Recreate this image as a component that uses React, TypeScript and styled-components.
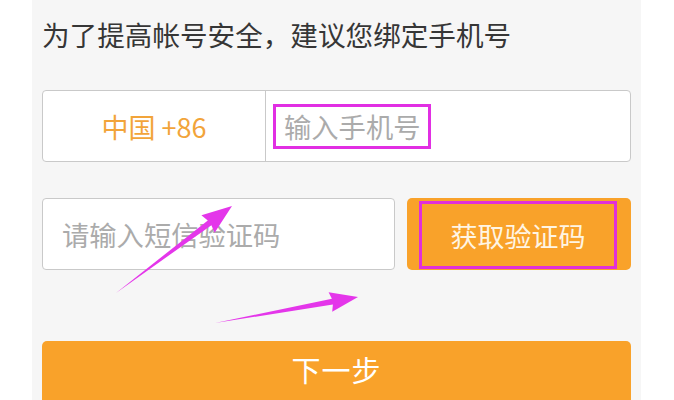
import React from "react";
import styled, { createGlobalStyle } from "styled-components";

const Global = createGlobalStyle`
  html, body { margin: 0; padding: 0; background: #ffffff; }
  body { font-family: "Noto Sans CJK SC", "Noto Sans", sans-serif; overflow: hidden; }
`;

const Page = styled.div`
  width: 674px;
  height: 400px;
  background: #ffffff;
  display: flex;
  overflow: hidden;
`;

const Panel = styled.div`
  position: relative;
  margin-left: 32px;
  width: 609px;
  height: 460px;
  background: #f6f6f6;
  padding: 21px 10px 0 10px;
  box-sizing: border-box;
  display: flex;
  flex-direction: column;
`;

const Title = styled.div`
  font-size: 27.6px;
  line-height: 27px;
  color: #363636;
  white-space: nowrap;
`;

const PhoneBox = styled.div`
  margin-top: 42px;
  height: 72px;
  box-sizing: border-box;
  border: 1.5px solid #c9c9c9;
  border-radius: 4px;
  background: #ffffff;
  display: flex;
`;

const Country = styled.div`
  width: 222px;
  flex: none;
  border-right: 1.5px solid #c9c9c9;
  display: flex;
  align-items: center;
  justify-content: center;
  font-size: 27px;
  color: #f2a43a;
`;

const PhoneField = styled.div`
  flex: 1;
  display: flex;
  align-items: center;
  padding-left: 7px;
`;

const Highlight = styled.span`
  display: inline-flex;
  align-items: center;
  box-sizing: border-box;
  height: 45px;
  padding: 0 8px;
  border: 3px solid #e12fe3;
`;

const Placeholder = styled.span`
  font-size: 27.3px;
  color: #ababab;
  white-space: nowrap;
`;

const CodeRow = styled.div`
  margin-top: 36px;
  height: 72px;
  display: flex;
  gap: 12px;
`;

const CodeField = styled.div`
  width: 353px;
  flex: none;
  box-sizing: border-box;
  border: 1.5px solid #c9c9c9;
  border-radius: 4px;
  background: #ffffff;
  display: flex;
  align-items: center;
  padding-left: 19px;
`;

const SendButton = styled.div`
  flex: 1;
  background: #f9a22a;
  border-radius: 5px;
  display: flex;
  align-items: center;
  padding: 3px 14px 1px 12px;
  box-sizing: border-box;
`;

const ButtonHighlight = styled.span`
  flex: 1;
  align-self: stretch;
  border: 3px solid #e12fd9;
  display: flex;
  align-items: center;
  justify-content: center;
  font-size: 27px;
  color: #fff5e4;
`;

const NextButton = styled.div`
  margin-top: 71px;
  height: 72px;
  box-sizing: border-box;
  padding-top: 7px;
  background: #f9a22a;
  border-radius: 5px 5px 0 0;
  display: flex;
  align-items: flex-start;
  justify-content: center;
  font-size: 29px;
  color: #ffffff;
  letter-spacing: 1px;
`;

const Overlay = styled.svg`
  position: absolute;
  left: -32px;
  top: 0;
  width: 674px;
  height: 400px;
  pointer-events: none;
`;

export default function App() {
  return (
    <>
      <Global />
      <Page>
        <Panel>
          <Title>为了提高帐号安全，建议您绑定手机号</Title>
          <PhoneBox>
            <Country>中国 +86</Country>
            <PhoneField>
              <Highlight>
                <Placeholder>输入手机号</Placeholder>
              </Highlight>
            </PhoneField>
          </PhoneBox>
          <CodeRow>
            <CodeField>
              <Placeholder>请输入短信验证码</Placeholder>
            </CodeField>
            <SendButton>
              <ButtonHighlight>获取验证码</ButtonHighlight>
            </SendButton>
          </CodeRow>
          <NextButton>下一步</NextButton>
          <Overlay viewBox="0 0 674 400">
            <polygon
              fill="#e436ea"
              points="116,293 207.8,220.4 201.4,215.2 232,206 214.6,232.8 211.4,225.2"
            />
            <polygon
              fill="#e436ea"
              points="215,323 331.9,298.7 328.6,292.2 358,297 332.2,311.8 332.9,304.6"
            />
          </Overlay>
        </Panel>
      </Page>
    </>
  );
}
